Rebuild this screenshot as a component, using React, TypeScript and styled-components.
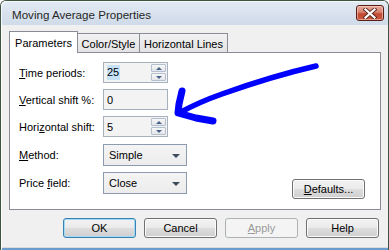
import React from "react";
import styled, { createGlobalStyle } from "styled-components";

const Global = createGlobalStyle`
  html, body { margin: 0; padding: 0; background: #ffffff; }
  body { font-family: "Liberation Sans", Arial, sans-serif; font-size: 11px; color: #000; }
  * { box-sizing: border-box; }
`;

const Window = styled.div`
  position: relative;
  width: 389px;
  height: 250px;
  background: #f0f0f0;
  border: 1px solid #405443;
  border-bottom: none;
  border-radius: 6px 6px 0 0;
  box-shadow: inset 1px 0 0 #fcfcfc, inset 0 -2px 0 #6a9ccc, inset 0 -3px 0 #dcdcdc;
  display: flex;
  flex-direction: column;
  overflow: hidden;
`;

const TitleBar = styled.div`
  height: 24px;
  flex: none;
  display: flex;
  align-items: center;
  justify-content: space-between;
  padding: 0 4px 0 11px;
  background: linear-gradient(#e3eaf3, #cfdbe9);
  border-radius: 5px 5px 0 0;
  box-shadow: inset 1px 1px 0 #f6f9fc;
`;

const Title = styled.span`
  font-family: "Liberation Sans", Arial, sans-serif;
  font-size: 11.6px;
  color: #262626;
  padding-top: 2px;
`;

const CloseButton = styled.div`
  width: 28px;
  height: 16px;
  border: 1px solid #5a1d15;
  border-radius: 3px;
  background: linear-gradient(#e9a99c 0%, #d6826f 45%, #c34a32 55%, #c8583f 100%);
  box-shadow: inset 0 0 0 1px rgba(255, 220, 210, 0.55);
  display: flex;
  align-items: center;
  justify-content: center;
`;

const Content = styled.div`
  flex: 1;
  display: flex;
  flex-direction: column;
  padding: 6px 7px 0 8px;
`;

const TabStrip = styled.div`
  display: flex;
  align-items: flex-end;
  height: 22px;
  margin-bottom: -1px;
  position: relative;
  z-index: 1;
`;

const Tab = styled.div<{ $w: number; $active?: boolean }>`
  width: ${(p) => p.$w}px;
  height: ${(p) => (p.$active ? 22 : 19)}px;
  margin-bottom: ${(p) => (p.$active ? 0 : 1)}px;
  margin-left: -1px;
  &:first-child { margin-left: 0; }
  border: 1px solid #898c95;
  border-bottom: none;
  background: ${(p) => (p.$active ? "#ffffff" : "linear-gradient(#f2f2f2, #e3e3e3)")};
  position: relative;
  z-index: ${(p) => (p.$active ? 2 : 1)};
  display: flex;
  align-items: center;
  justify-content: center;
  padding-top: ${(p) => (p.$active ? 0 : 1)}px;
  white-space: nowrap;
`;

const Panel = styled.div`
  width: 372px;
  height: 158px;
  border: 1px solid #898c95;
  background: #ffffff;
  display: flex;
  justify-content: space-between;
  align-items: flex-end;
  padding: 9px 15px 10px 9px;
`;

const Fields = styled.div`
  align-self: flex-start;
  display: flex;
  flex-direction: column;
  gap: 6px;
`;

const FieldRow = styled.div<{ $h: number; $shift?: number }>`
  display: flex;
  align-items: center;
  height: ${(p) => p.$h}px;
  margin-top: ${(p) => p.$shift ?? 0}px;
`;

const Label = styled.span`
  width: 84px;
  white-space: nowrap;
`;

const Key = styled.span`
  text-decoration: underline;
`;

const EditBox = styled.div<{ $w: number }>`
  width: ${(p) => p.$w}px;
  height: 21px;
  border: 1px solid #a7b0bd;
  background: #f3f3f3;
  display: flex;
  align-items: stretch;
  padding: 1px 1px 1px 3px;
`;

const EditText = styled.div`
  flex: 1;
  display: flex;
  align-items: center;
`;

const Selected = styled.span`
  background: #c6e3fa;
  padding: 1px 1px 2px 0;
`;

const Spinner = styled.div`
  width: 15px;
  display: flex;
  flex-direction: column;
  gap: 1px;
  padding: 0 0 0 0;
`;

const SpinButton = styled.div<{ $down?: boolean }>`
  flex: 1;
  border: 1px solid #b3bfce;
  border-radius: 1px;
  background: linear-gradient(#f7f7f7, #e3e6ea);
  display: flex;
  align-items: center;
  justify-content: center;
  &::after {
    content: "";
    width: 0;
    height: 0;
    border-left: 3px solid transparent;
    border-right: 3px solid transparent;
    ${(p) =>
      p.$down
        ? "border-top: 3px solid #4a6286;"
        : "border-bottom: 3px solid #4a6286;"}
  }
`;

const Combo = styled.div`
  width: 84px;
  height: 22px;
  border: 1px solid #8d9bb0;
  background: linear-gradient(#f4f4f4, #ececec);
  display: flex;
  align-items: center;
  justify-content: space-between;
  padding: 0 6px 0 5px;
  &::after {
    content: "";
    width: 0;
    height: 0;
    border-left: 4px solid transparent;
    border-right: 4px solid transparent;
    border-top: 4px solid #3d4a5c;
    margin-top: 1px;
  }
`;

const Button = styled.div<{ $default?: boolean; $disabled?: boolean }>`
  width: 73px;
  height: 20px;
  border: 1px solid ${(p) => (p.$default ? "#3c7fb1" : p.$disabled ? "#adb2b5" : "#707070")};
  border-radius: 3px;
  background: ${(p) =>
    p.$disabled
      ? "#f4f4f4"
      : "linear-gradient(#f2f2f2 0%, #ebebeb 48%, #dddddd 52%, #cfcfcf 100%)"};
  box-shadow: inset 0 0 0 1px ${(p) => (p.$default ? "#9fdcf7" : p.$disabled ? "#f4f4f4" : "#fbfbfb")};
  color: ${(p) => (p.$disabled ? "#9a9a9a" : "#000")};
  display: flex;
  align-items: center;
  justify-content: center;
  flex: none;
`;

const ButtonRow = styled.div`
  display: flex;
  justify-content: flex-end;
  gap: 8px;
  margin-top: 8px;
  padding-right: 2px;
`;

const Overlay = styled.svg`
  position: absolute;
  left: -1px;
  top: -1px;
  width: 389px;
  height: 250px;
  pointer-events: none;
`;

export default function App() {
  return (
    <>
      <Global />
      <Window>
        <TitleBar>
          <Title>Moving Average Properties</Title>
          <CloseButton>
            <svg width="14" height="11" viewBox="0 0 14 11">
              <path d="M2.5 1.5 L11.5 9.5 M11.5 1.5 L2.5 9.5" stroke="#5a2a24" strokeWidth="4" strokeLinecap="square" />
              <path d="M2.5 1.5 L11.5 9.5 M11.5 1.5 L2.5 9.5" stroke="#ffffff" strokeWidth="2.2" strokeLinecap="square" />
            </svg>
          </CloseButton>
        </TitleBar>
        <Content>
          <TabStrip>
            <Tab $w={69} $active>Parameters</Tab>
            <Tab $w={63}>Color/Style</Tab>
            <Tab $w={89}>Horizontal Lines</Tab>
          </TabStrip>
          <Panel>
            <Fields>
              <FieldRow $h={21}>
                <Label><Key>T</Key>ime periods:</Label>
                <EditBox $w={65}>
                  <EditText><Selected>25</Selected></EditText>
                  <Spinner>
                    <SpinButton />
                    <SpinButton $down />
                  </Spinner>
                </EditBox>
              </FieldRow>
              <FieldRow $h={21}>
                <Label><Key>V</Key>ertical shift %:</Label>
                <EditBox $w={65}>
                  <EditText>0</EditText>
                </EditBox>
              </FieldRow>
              <FieldRow $h={21}>
                <Label>Hori<Key>z</Key>ontal shift:</Label>
                <EditBox $w={65}>
                  <EditText>5</EditText>
                  <Spinner>
                    <SpinButton />
                    <SpinButton $down />
                  </Spinner>
                </EditBox>
              </FieldRow>
              <FieldRow $h={22} $shift={1}>
                <Label><Key>M</Key>ethod:</Label>
                <Combo>Simple</Combo>
              </FieldRow>
              <FieldRow $h={22}>
                <Label>Price <Key>f</Key>ield:</Label>
                <Combo>Close</Combo>
              </FieldRow>
            </Fields>
            <Button><span><Key>D</Key>efaults...</span></Button>
          </Panel>
          <ButtonRow>
            <Button $default>OK</Button>
            <Button>Cancel</Button>
            <Button $disabled><span><Key>A</Key>pply</span></Button>
            <Button>Help</Button>
          </ButtonRow>
        </Content>
        <Overlay viewBox="0 0 389 250">
          <g fill="none" stroke="#0000ff" strokeLinecap="round" strokeLinejoin="round">
            <path d="M316 66 C290 72 250 84 222 94 C205 100 192 106 181 112" strokeWidth="5.5" />
            <path d="M182 91 L179 104 L178 113 L196 118 L213 121" strokeWidth="7" />
          </g>
        </Overlay>
      </Window>
    </>
  );
}
